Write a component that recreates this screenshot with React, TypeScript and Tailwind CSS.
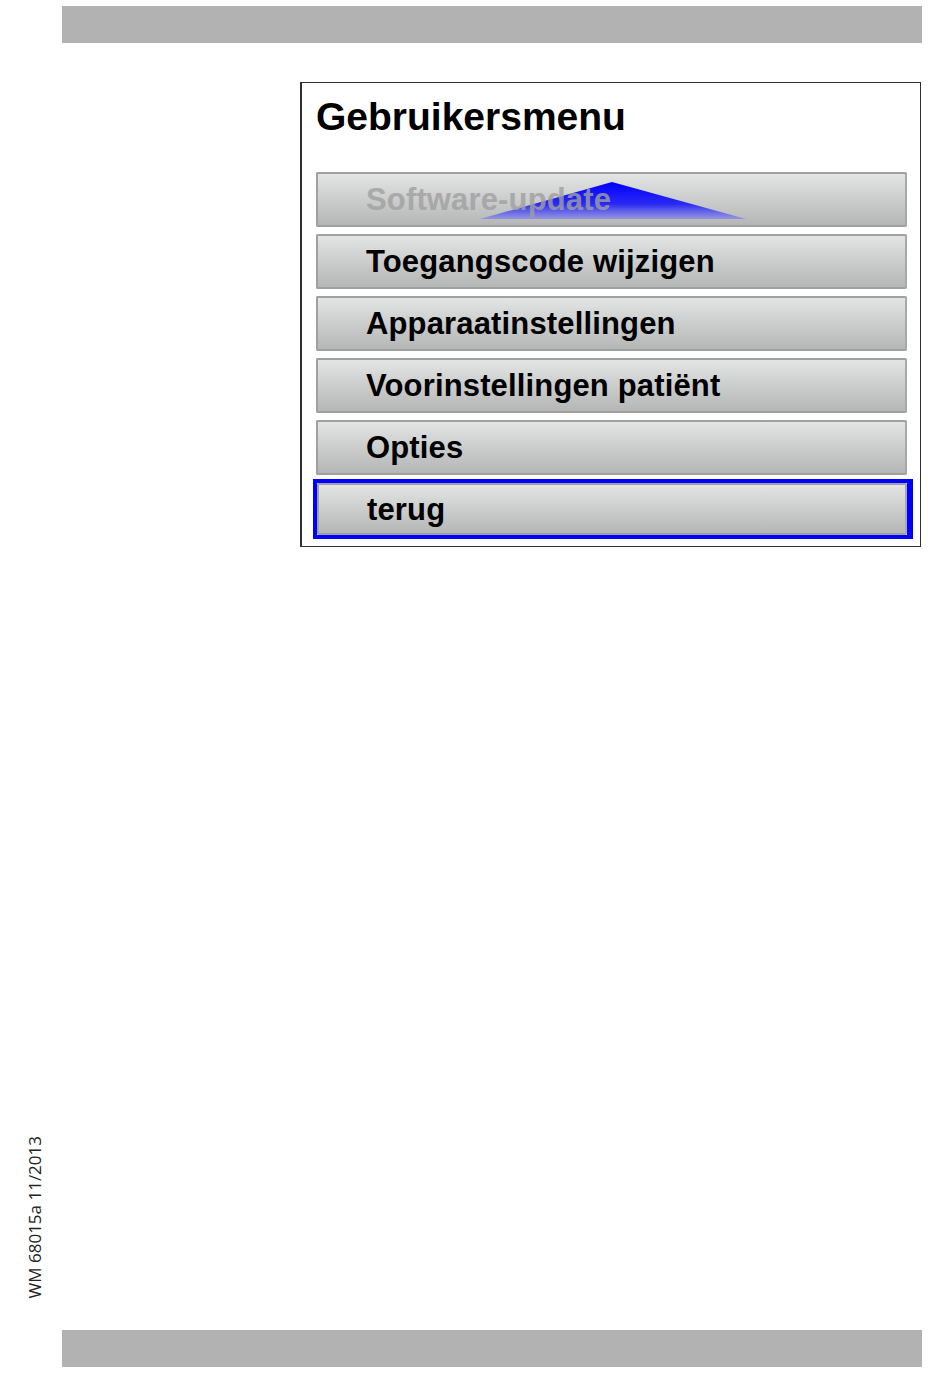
const items = [
  { label: 'Software-update', disabled: true },
  { label: 'Toegangscode wijzigen' },
  { label: 'Apparaatinstellingen' },
  { label: 'Voorinstellingen patiënt' },
  { label: 'Opties' },
]

function MenuButton({ label, disabled, wide }: { label: string; disabled?: boolean; wide?: boolean }) {
  return (
    <div
      className={`relative flex items-center ${wide ? 'w-full h-full' : 'w-[591px] h-[55px]'} border-2 border-[#a0a0a0] border-r-[#a8a8a8] rounded-[2px] bg-gradient-to-b from-[#e3e4e4] to-[#b5b6b6] pl-[48px]`}
    >
      {disabled && (
        <svg className="absolute left-[162px] top-[8px]" width="266" height="38" viewBox="0 0 266 38">
          <defs>
            <linearGradient id="tri" x1="0" y1="0" x2="0" y2="1">
              <stop offset="0" stopColor="#0000ff" />
              <stop offset="0.6" stopColor="#2a2af4" />
              <stop offset="1" stopColor="#8a8ae6" stopOpacity="0.8" />
            </linearGradient>
          </defs>
          <polygon points="132,0 0,37 266,37" fill="url(#tri)" />
        </svg>
      )}
      <span
        className={`relative text-[31px] font-bold leading-none tracking-[0.15px] ${disabled ? 'text-[#a0a0a0] opacity-80' : 'text-black'}`}
      >
        {label}
      </span>
    </div>
  )
}

export default function App() {
  return (
    <div className="w-[950px] h-[1381px] bg-white flex flex-col pt-[6px] font-['Liberation_Sans',Arial,sans-serif]">
      <div className="ml-[62px] w-[860px] h-[37px] bg-[#b2b2b2] shrink-0" />

      <div className="flex-1 flex">
        <div className="w-[62px] flex flex-col justify-end items-center pb-[32px] pl-[6px]">
          <span className="[writing-mode:vertical-rl] rotate-180 text-[17px] leading-none text-[#222] font-['Open_Sans','DejaVu_Sans',sans-serif]">
            WM 68015a 11/2013
          </span>
        </div>

        <div className="pl-[238px] pt-[39px]">
          <div className="w-[621px] h-[465px] border border-l-2 border-[#303030] bg-white pl-[14px] pt-[14px]">
            <h1 className="text-[39px] font-bold leading-[40px] text-black">Gebruikersmenu</h1>
            <div className="mt-[35px] flex flex-col gap-[7px]">
              {items.map((it) => (
                <MenuButton key={it.label} label={it.label} disabled={it.disabled} />
              ))}
              <div className="-ml-[3px] -mt-[3px] w-[600px] h-[60px] border-4 border-[#0000ff] border-r-[6px]">
                <MenuButton label="terug" wide />
              </div>
            </div>
          </div>
        </div>
      </div>

      <div className="ml-[62px] w-[860px] h-[37px] bg-[#b2b2b2] shrink-0 mb-[14px]" />
    </div>
  )
}
